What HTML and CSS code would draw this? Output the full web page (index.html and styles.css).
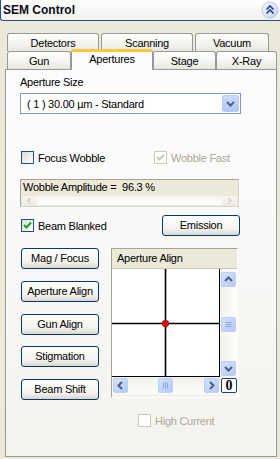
FILE: index.html
```html
<!DOCTYPE html>
<html>
<head>
    <title>SEM Control</title>
    <link rel="stylesheet" href="styles.css">
</head>
<body>
    <div class="titlebar">
        <span class="title">SEM Control</span>
        <svg class="collapse" width="18" height="18" viewBox="0 0 18 18">
            <defs>
                <linearGradient id="cg" x1="0" y1="0" x2="1" y2="1">
                    <stop offset="0" stop-color="#ffffff"/>
                    <stop offset="1" stop-color="#c3d1f5"/>
                </linearGradient>
            </defs>
            <circle cx="9" cy="9" r="8" fill="url(#cg)" stroke="#b7c6ea"/>
            <polyline points="5.5,8.5 9,5 12.5,8.5" fill="none" stroke="#21438f" stroke-width="1.7"/>
            <polyline points="5.5,12.5 9,9 12.5,12.5" fill="none" stroke="#21438f" stroke-width="1.7"/>
        </svg>
    </div>

    <div class="tabs">
        <div class="tab-row back">
            <div class="tab" style="width: 92px;">Detectors</div>
            <div class="tab" style="width: 92px;">Scanning</div>
            <div class="tab" style="width: 74px;">Vacuum</div>
        </div>
        <div class="tab-row front">
            <div class="tab" style="width: 64px;">Gun</div>
            <div class="tab active" style="width: 82px;">Apertures</div>
            <div class="tab" style="width: 63px;">Stage</div>
            <div class="tab" style="width: 61px;">X-Ray</div>
        </div>
    </div>

    <div class="page">
        <div class="label">Aperture Size</div>
        <div class="select">
            <span>( 1 ) 30.00 &micro;m - Standard</span>
            <span class="drop">
                <svg width="15" height="15" viewBox="0 0 15 15"><polyline points="4,6 7.5,9.5 11,6" fill="none" stroke="#4d6185" stroke-width="2"/></svg>
            </span>
        </div>

        <div class="check-row">
            <div class="check wide">
                <span class="cb"></span>
                <span>Focus Wobble</span>
            </div>
            <div class="check disabled">
                <span class="cb">
                    <svg width="11" height="11" viewBox="0 0 11 11"><polyline points="2,5 4.5,7.5 9,2.5" fill="none" stroke="#c9c7ba" stroke-width="2"/></svg>
                </span>
                <span>Wobble Fast</span>
            </div>
        </div>

        <div class="amp">
            <div class="amp-text">Wobble Amplitude =&nbsp; 96.3 %</div>
            <div class="amp-scroll">
                <span class="amp-btn">
                    <svg width="15" height="9" viewBox="0 0 15 9"><polyline points="8.5,2 6,4.5 8.5,7" fill="none" stroke="#d3d1c6" stroke-width="1.5"/></svg>
                </span>
                <span class="amp-btn">
                    <svg width="15" height="9" viewBox="0 0 15 9"><polyline points="6.5,2 9,4.5 6.5,7" fill="none" stroke="#d3d1c6" stroke-width="1.5"/></svg>
                </span>
            </div>
        </div>

        <div class="beam-row">
            <div class="check">
                <span class="cb">
                    <svg width="11" height="11" viewBox="0 0 11 11"><polyline points="2,5 4.5,7.5 9,2.5" fill="none" stroke="#21a121" stroke-width="2"/></svg>
                </span>
                <span>Beam Blanked</span>
            </div>
            <div class="btn emission">Emission</div>
        </div>

        <div class="lower">
            <div class="btn-col">
                <div class="btn">Mag / Focus</div>
                <div class="btn">Aperture Align</div>
                <div class="btn">Gun Align</div>
                <div class="btn">Stigmation</div>
                <div class="btn">Beam Shift</div>
            </div>

            <div class="align-box">
                <div class="align-head">Aperture Align</div>
                <div class="align-body">
                    <svg class="plot" width="108" height="108" viewBox="0 0 108 108">
                        <rect x="0" y="0" width="108" height="108" fill="#ffffff"/>
                        <line x1="107.5" y1="0" x2="107.5" y2="108" stroke="#000" stroke-width="1"/>
                        <line x1="0" y1="107.5" x2="108" y2="107.5" stroke="#000" stroke-width="1"/>
                        <line x1="53.5" y1="0" x2="53.5" y2="108" stroke="#000" stroke-width="1.6"/>
                        <line x1="0" y1="54.5" x2="108" y2="54.5" stroke="#000" stroke-width="1.6"/>
                        <circle cx="53.5" cy="54.5" r="3.3" fill="#e8000b" stroke="#a00000" stroke-width="0.6"/>
                    </svg>
                    <div class="vscroll">
                        <span class="sb-btn">
                            <svg width="15" height="15" viewBox="0 0 15 15"><polyline points="4,9 7.5,5.5 11,9" fill="none" stroke="#4d6185" stroke-width="2"/></svg>
                        </span>
                        <span class="sb-btn thumb-v">
                            <svg width="15" height="15" viewBox="0 0 15 15"><path d="M4.5 5.5h6M4.5 7.5h6M4.5 9.5h6" stroke="#8ea6e4" stroke-width="1"/></svg>
                        </span>
                        <span class="sb-btn">
                            <svg width="15" height="15" viewBox="0 0 15 15"><polyline points="4,6 7.5,9.5 11,6" fill="none" stroke="#4d6185" stroke-width="2"/></svg>
                        </span>
                    </div>
                    <div class="hscroll">
                        <span class="sb-btn">
                            <svg width="15" height="15" viewBox="0 0 15 15"><polyline points="9,4 5.5,7.5 9,11" fill="none" stroke="#4d6185" stroke-width="2"/></svg>
                        </span>
                        <span class="sb-btn thumb-h">
                            <svg width="15" height="15" viewBox="0 0 15 15"><path d="M5.5 4.5v6M7.5 4.5v6M9.5 4.5v6" stroke="#8ea6e4" stroke-width="1"/></svg>
                        </span>
                        <span class="sb-btn">
                            <svg width="15" height="15" viewBox="0 0 15 15"><polyline points="6,4 9.5,7.5 6,11" fill="none" stroke="#4d6185" stroke-width="2"/></svg>
                        </span>
                    </div>
                    <div class="corner">0</div>
                </div>
            </div>
        </div>

        <div class="check disabled high">
            <span class="cb"></span>
            <span>High Current</span>
        </div>
    </div>
</body>
</html>
```

FILE: styles.css
```css
body {
    margin: 0;
    width: 280px;
    height: 459px;
    overflow: hidden;
    background-color: #ece9d8;
    font-family: "Liberation Sans", Arial, sans-serif;
    font-size: 11px;
    letter-spacing: -0.25px;
    color: #000;
}

/* title bar */
.titlebar {
    height: 21px;
    box-sizing: border-box;
    display: flex;
    align-items: center;
    justify-content: space-between;
    padding-left: 2px;
    padding-right: 1px;
    background: linear-gradient(#ffffff, #f1f1ee);
    border-left: 1px solid #2c4d8c;
    border-bottom: 1px solid #2c4d8c;
    border-bottom-left-radius: 3px;
}

.title {
    font-size: 12px;
    font-weight: bold;
    letter-spacing: 0;
    color: #0b0b22;
}

/* tabs */
.tabs {
    margin-top: 12px;
    padding-left: 7px;
}

.tab-row {
    display: flex;
    height: 18px;
}

.tab-row.back {
    gap: 2px;
}

.tab {
    box-sizing: border-box;
    height: 18px;
    border: 1px solid #919b9c;
    border-bottom: none;
    border-radius: 3px 3px 0 0;
    background: linear-gradient(#ffffff, #f4f3ef 60%, #e7e6df);
    text-align: center;
    line-height: 18px;
}

.tab.active {
    position: relative;
    z-index: 1;
    height: 21px;
    margin-top: -2px;
    border-top: 3px solid #ffc83c;
    background: #fcfcfe;
    line-height: 15px;
}

/* tab page */
.page {
    margin-left: 5px;
    width: 272px;
    height: 388px;
    box-sizing: border-box;
    border: 1px solid #919b9c;
    background: linear-gradient(#fcfcfe, #f4f3ee);
    padding: 6px 0 0 14px;
}

.label {
    height: 13px;
    line-height: 13px;
}

.select {
    margin-top: 4px;
    width: 221px;
    height: 21px;
    box-sizing: border-box;
    border: 1px solid #7f9db9;
    background-color: #fff;
    display: flex;
    align-items: center;
    justify-content: space-between;
    padding: 0 1px 0 6px;
}

.drop {
    width: 17px;
    height: 17px;
    box-sizing: border-box;
    border: 1px solid #b9cbf3;
    border-radius: 2px;
    background: linear-gradient(#cad8fd, #b3c7f5);
    display: flex;
    align-items: center;
    justify-content: center;
}

/* checkboxes */
.check-row {
    margin-top: 37px;
    display: flex;
    align-items: center;
    height: 13px;
}

.check {
    display: flex;
    align-items: center;
    gap: 4px;
    margin-left: 1px;
}

.check.wide {
    width: 132px;
}

.cb {
    width: 13px;
    height: 13px;
    box-sizing: border-box;
    border: 1px solid #1c5180;
    background: linear-gradient(135deg, #dcdcd7, #ffffff);
    display: flex;
}

.check.disabled {
    color: #aca899;
}

.check.disabled .cb {
    border-color: #cac8bb;
    background: #ffffff;
}

/* wobble amplitude */
.amp {
    margin-top: 15px;
    width: 219px;
    height: 28px;
    box-sizing: border-box;
    border: 1px solid #a5a294;
    border-right-color: #d8d5c9;
    border-bottom-color: #d8d5c9;
    background-color: #ece9d8;
}

.amp-text {
    height: 16px;
    line-height: 15px;
    padding-left: 2px;
}

.amp-scroll {
    height: 9px;
    margin: 0 1px;
    display: flex;
    justify-content: space-between;
    background: linear-gradient(#f6f5f0, #fdfdfb);
}

.amp-btn {
    width: 15px;
    height: 9px;
    border-radius: 2px;
    background: linear-gradient(#f6f5f1, #eceae2);
    display: flex;
}

/* buttons */
.btn {
    box-sizing: border-box;
    height: 21px;
    border: 1px solid #003c74;
    border-radius: 3px;
    background: linear-gradient(#ffffff, #f3f2ed 70%, #d9d5cb);
    text-align: center;
    line-height: 19px;
}

.beam-row {
    margin-top: 8px;
    width: 220px;
    height: 21px;
    display: flex;
    align-items: center;
    justify-content: space-between;
}

.emission {
    width: 78px;
}

.lower {
    margin-top: 12px;
    display: flex;
    gap: 12px;
}

.btn-col {
    margin-left: 1px;
    width: 78px;
    display: flex;
    flex-direction: column;
    gap: 11.75px;
}

/* aperture align plot */
.align-box {
    width: 127px;
    height: 150px;
    box-sizing: border-box;
    border: 1px solid #a7a493;
    border-right-color: #fdfdfb;
    border-bottom-color: #fdfdfb;
    background-color: #f4f3ee;
}

.align-head {
    height: 20px;
    box-sizing: border-box;
    border-bottom: 1px solid #c9c6b6;
    background-color: #ece9d8;
    line-height: 19px;
    padding-left: 5px;
}

.align-body {
    display: grid;
    grid-template-columns: 108px 17px;
    grid-template-rows: 108px 17px;
}

.plot {
    display: block;
}

.vscroll {
    display: flex;
    flex-direction: column;
    justify-content: space-between;
    align-items: center;
    padding: 3px 0 1px;
    background: linear-gradient(90deg, #f2f1ec, #fdfdfb);
}

.hscroll {
    display: flex;
    align-items: center;
    padding: 0 1px;
    background: linear-gradient(#f2f1ec, #fdfdfb);
}

.hscroll .thumb-h {
    margin-left: 30px;
    margin-right: auto;
}

.sb-btn {
    width: 15px;
    height: 15px;
    box-sizing: border-box;
    border: 1px solid #bccdf6;
    border-radius: 2px;
    background: linear-gradient(135deg, #d6e1fd, #b5c9f7);
    display: flex;
    align-items: center;
    justify-content: center;
}

.sb-btn svg {
    flex: none;
}

.corner {
    margin: 1px 0 0 1px;
    width: 16px;
    height: 15px;
    box-sizing: border-box;
    border: 1px solid #1c3f6e;
    border-radius: 2px;
    background-color: #fff;
    font-family: "Liberation Serif", "Times New Roman", serif;
    font-weight: bold;
    font-size: 14px;
    letter-spacing: 0;
    line-height: 13px;
    text-align: center;
}

.high {
    margin-top: 14px;
    margin-left: 118px;
}
```
